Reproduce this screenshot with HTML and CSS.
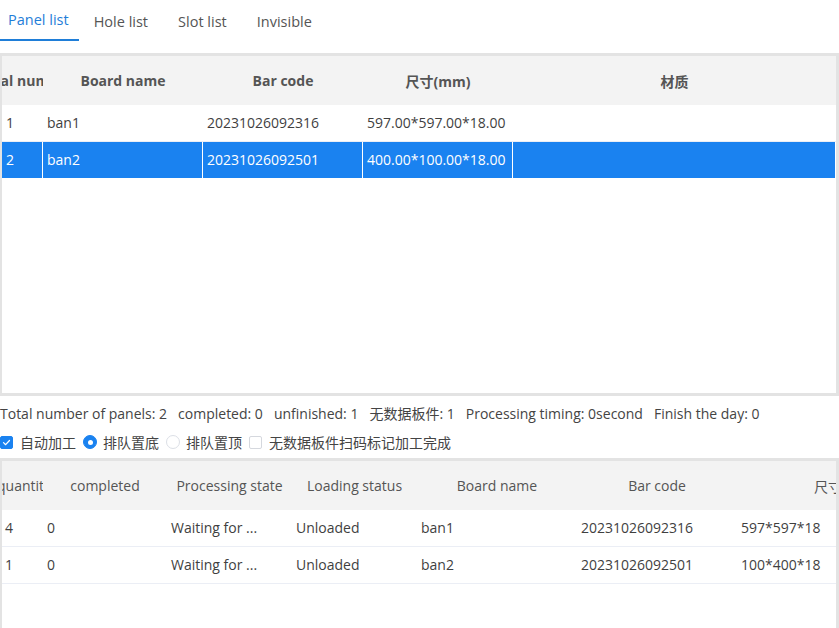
FILE: index.html
```html
<!DOCTYPE html>
<html lang="en">
<head>
<meta charset="utf-8">
<title>Panel list</title>
<link rel="stylesheet" href="styles.css">
</head>
<body>
<div class="tabs">
  <div class="tab active">Panel list</div>
  <div class="tab">Hole list</div>
  <div class="tab">Slot list</div>
  <div class="tab">Invisible</div>
</div>

<section class="frame frame-top">
  <div class="grid grid-top head">
    <div class="th"><span class="shift-serial">Serial number</span></div>
    <div class="th">Board name</div>
    <div class="th">Bar code</div>
    <div class="th">尺寸(mm)</div>
    <div class="th">材质</div>
  </div>
  <div class="grid grid-top row">
    <div class="td">1</div>
    <div class="td">ban1</div>
    <div class="td">20231026092316</div>
    <div class="td">597.00*597.00*18.00</div>
    <div class="td"></div>
  </div>
  <div class="grid grid-top row selected">
    <div class="td">2</div>
    <div class="td">ban2</div>
    <div class="td">20231026092501</div>
    <div class="td">400.00*100.00*18.00</div>
    <div class="td"></div>
  </div>
</section>

<div class="status">
  <span>Total number of panels: 2</span>
  <span>completed: 0</span>
  <span>unfinished: 1</span>
  <span>无数据板件: 1</span>
  <span>Processing timing: 0second</span>
  <span>Finish the day: 0</span>
</div>

<div class="options">
  <label class="opt"><span class="checkbox checked"><svg viewBox="0 0 14 14" width="13" height="13"><path d="M3.2 7.2 L5.9 9.8 L10.8 4.4" fill="none" stroke="#fff" stroke-width="1.6" stroke-linecap="round" stroke-linejoin="round"/></svg></span>自动加工</label>
  <label class="opt"><span class="radio checked"></span>排队置底</label>
  <label class="opt"><span class="radio"></span>排队置顶</label>
  <label class="opt"><span class="checkbox"></span>无数据板件扫码标记加工完成</label>
</div>

<section class="frame frame-bottom">
  <div class="grid grid-bottom head">
    <div class="th"><span class="shift-qty">quantity</span></div>
    <div class="th">completed</div>
    <div class="th">Processing state</div>
    <div class="th">Loading status</div>
    <div class="th">Board name</div>
    <div class="th">Bar code</div>
    <div class="th">尺寸(mm)</div>
  </div>
  <div class="grid grid-bottom row">
    <div class="td">4</div>
    <div class="td">0</div>
    <div class="td">Waiting for ...</div>
    <div class="td">Unloaded</div>
    <div class="td">ban1</div>
    <div class="td">20231026092316</div>
    <div class="td">597*597*18</div>
  </div>
  <div class="grid grid-bottom row">
    <div class="td">1</div>
    <div class="td">0</div>
    <div class="td">Waiting for ...</div>
    <div class="td">Unloaded</div>
    <div class="td">ban2</div>
    <div class="td">20231026092501</div>
    <div class="td">100*400*18</div>
  </div>
</section>
</body>
</html>
```

FILE: styles.css
```css
html, body {
  margin: 0;
  padding: 0;
}
body {
  font-family: "Open Sans", "Noto Sans CJK SC", sans-serif;
  font-size: 14px;
  color: #444;
  background: #fff;
  height: 628px;
  overflow: hidden;
  display: flex;
  flex-direction: column;
}

/* tabs */
.tabs {
  display: flex;
  align-items: flex-start;
  height: 41px;
  flex: 0 0 auto;
}
.tab {
  padding: 0 15px;
  height: 41px;
  line-height: 43px;
  color: #555;
  font-size: 14.5px;
  box-sizing: border-box;
  white-space: nowrap;
}
.tab.active {
  padding: 0 10px 0 8px;
  color: #1f7ed8;
  line-height: 39px;
  border-bottom: 2px solid #1f7ed8;
}

/* table frames */
.frame {
  border: 3px solid #e3e3e3;
  border-left-width: 2px;
  overflow: hidden;
  box-sizing: border-box;
  flex: 0 0 auto;
}
.frame-top {
  margin-top: 12px;
  height: 343px;
}
.frame-bottom {
  margin-top: 2px;
  flex: 1 0 auto;
  border-bottom: none;
}

.grid {
  display: grid;
}
.grid-top {
  grid-template-columns: 41px 160px 160px 150px 1fr;
}
.grid-bottom {
  grid-template-columns: 41px 124px 125px 125px 160px 160px 216px;
}

.head {
  height: 49px;
  background: #f3f3f3;
  align-items: center;
}
.th {
  text-align: center;
  color: #555;
  white-space: nowrap;
  overflow: hidden;
}
.grid-top .th {
  font-weight: bold;
}
.shift-serial {
  display: inline-block;
  margin-left: -28px;
}
.shift-qty {
  display: inline-block;
  margin-left: -5px;
}
.grid-top .th:first-child,
.grid-bottom .th:first-child {
  text-align: left;
}

.row {
  height: 37px;
  border-bottom: 1px solid #ebeef5;
  box-sizing: border-box;
}
.td {
  padding-left: 4px;
  line-height: 36px;
  border-right: 1px solid #fff;
  white-space: nowrap;
  overflow: hidden;
  color: #3f3f3f;
}
.grid-bottom .td:first-child {
  padding-left: 3px;
}
.row.selected {
  background: #1a82f0;
  border-bottom-color: #fff;
}
.row.selected .td {
  color: #fff;
}

/* status */
.status {
  margin-top: 4px;
  height: 28px;
  line-height: 28px;
  display: flex;
  column-gap: 11px;
  white-space: nowrap;
  flex: 0 0 auto;
}

.options {
  height: 28px;
  display: flex;
  align-items: center;
  flex: 0 0 auto;
}
.opt {
  display: flex;
  align-items: center;
  column-gap: 6px;
  margin-right: 7px;
  white-space: nowrap;
}
.checkbox {
  width: 13px;
  height: 13px;
  box-sizing: border-box;
  border: 1px solid #d5d8de;
  border-radius: 2px;
  background: #fff;
  display: inline-flex;
  align-items: center;
  justify-content: center;
  margin-right: 1px;
}
.checkbox.checked {
  background: #1a82f0;
  border-color: #1a82f0;
}
.checkbox svg {
  display: block;
}
.radio {
  width: 14px;
  height: 14px;
  box-sizing: border-box;
  border: 1px solid #dcdfe6;
  border-radius: 50%;
  background: #fff;
  position: relative;
}
.radio.checked {
  background: #1a82f0;
  border-color: #1a82f0;
}
.radio.checked::after {
  content: "";
  position: absolute;
  left: 50%;
  top: 50%;
  width: 5px;
  height: 5px;
  margin: -2.5px 0 0 -2.5px;
  border-radius: 50%;
  background: #fff;
}
```
